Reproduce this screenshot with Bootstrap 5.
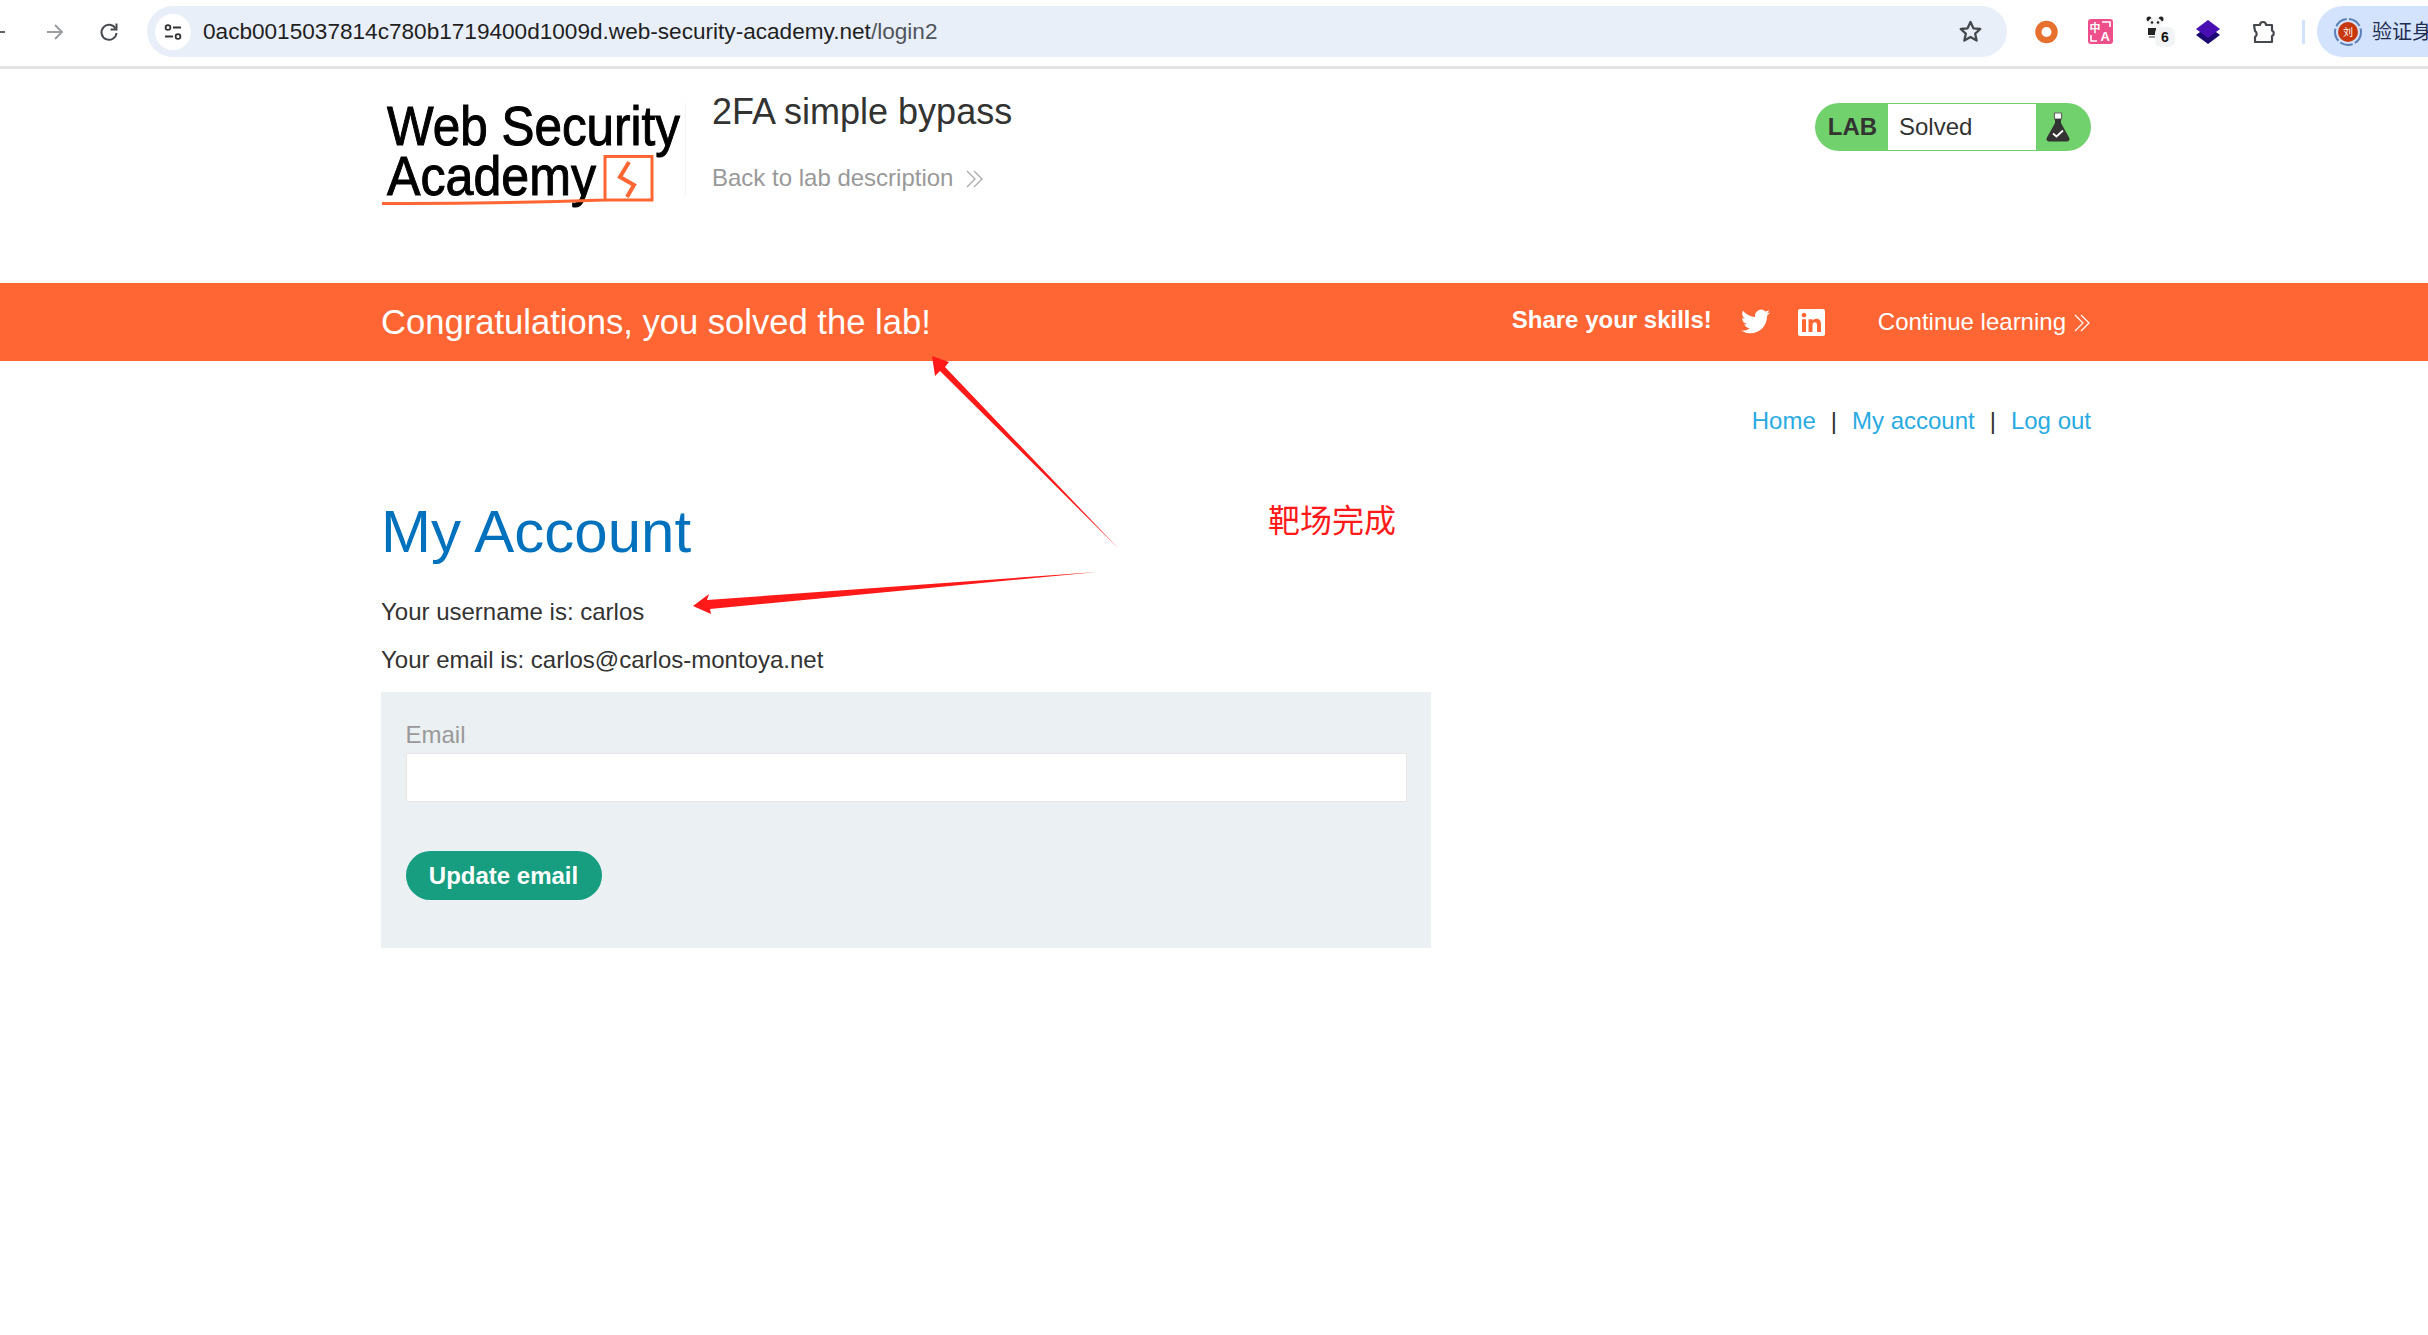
<!DOCTYPE html>
<html lang="en">
<head>
  <title>2FA simple bypass</title>
  <meta charset="UTF-8">
  <meta name="viewport" content="width=device-width, initial-scale=1.0">
  <link href="https://cdn.jsdelivr.net/npm/bootstrap@5.3.2/dist/css/bootstrap.min.css" rel="stylesheet">
  <style>
    body {
      font-family: "Liberation Sans", Arial, sans-serif;
      font-size: 24px;
      line-height: 30px;
      color: #333332;
      background-color: #fff;
      overflow: hidden;
    }
    /* browser toolbar */
    .tool-bar {
      height: 69px;
      padding-bottom: 3px;
      border-bottom: 3px solid #e3e3e3;
      overflow: hidden;
    }
    .tool-bar > * { flex-shrink: 0; }
    .tb-back { margin-left: -12px; width: 18px; }
    .tb-fwd { margin-left: 40px; width: 18px; }
    .tb-reload { margin-left: 35px; width: 20px; }
    .url-pill {
      margin-left: 28px;
      width: 1860px;
      height: 51px;
      padding: 0 24px 0 8px;
      background-color: #e9eff9;
      border-radius: 26px;
      font-size: 22.6px;
      color: #1f1f1f;
    }
    .url-path { color: #50555c; }
    .site-info {
      width: 36px;
      height: 36px;
      margin-right: 12px;
      background-color: #fff;
      border-radius: 50%;
    }
    .ext-ring { margin-left: 28px; width: 23px; }
    .ext-trans { margin-left: 30px; width: 25px; }
    .ext-panda { margin-left: 33px; width: 28px; height: 32px; }
    .ext-count {
      position: absolute;
      left: 9px;
      top: 11px;
      width: 20px;
      height: 20px;
      background-color: #f1f3f4;
      border-radius: 6px;
      font-size: 14px;
      font-weight: 700;
      line-height: 20px;
      text-align: center;
      color: #111;
    }
    .ext-layers { margin-left: 22px; width: 24px; }
    .ext-puzzle { margin-left: 32px; width: 24px; }
    .tb-sep { margin-left: 26px; width: 3px; height: 24px; background-color: #d3e3fd; }
    .profile-pill {
      margin-left: 12px;
      width: 140px;
      height: 51px;
      padding-left: 17px;
      background-color: #d3e3fd;
      border-radius: 26px 0 0 26px;
      font-family: "Liberation Sans", "Noto Sans CJK SC", sans-serif;
      font-size: 20px;
      color: #1f2d50;
      white-space: nowrap;
    }
    .profile-pill svg { margin-right: 10px; }

    /* lab page */
    .page-body { position: relative; height: 1266px; }
    .lab-wrap { margin-left: 381px; width: 1710px; }
    .lab-head { height: 214px; padding-top: 31px; }
    .lab-logo { width: 306px; height: 110px; margin-left: -1px; flex: none; }
    .lab-title-box { margin-left: 26px; }
    .lab-title { font-size: 36px; line-height: 37px; margin: -7px 0 33px; color: #333332; font-weight: 400; }
    .back-link { color: #999; text-decoration: none; }
    .back-link svg { margin-left: 13px; vertical-align: -2px; }
    .lab-status {
      width: 276px;
      height: 48px;
      margin-top: 3px;
      background-color: #70d16d;
      border-radius: 24px;
      overflow: hidden;
    }
    .lab-tag { width: 73px; text-align: center; font-weight: 700; padding-left: 2px; }
    .lab-state {
      width: 148px;
      height: 46px;
      padding-left: 11px;
      background-color: #fff;
      line-height: 46px;
    }
    .lab-flask { flex-grow: 1; padding-left: 10px; }
    .win-banner { height: 78px; background-color: #ff6633; color: #fff; }
    .win-text { font-size: 34.6px; }
    .share-text { font-weight: 700; margin-top: -5px; }
    .share-icon { margin-left: 28px; }
    .share-icon.tw { margin-left: 29px; margin-top: -1px; }
    .continue-link { margin-left: 53px; color: #fff; text-decoration: none; }
    .continue-link svg { margin-left: 8px; vertical-align: -2px; }
    .top-links { padding-top: 45px; }
    .top-links a { color: #29abe2; text-decoration: none; }
    .link-bar { margin: 0 15px; }
    .acct-title { font-size: 60px; line-height: 71px; margin: 60px 0 30px; color: #0071bc; font-weight: 400; }
    .acct-line { margin: 0 0 18px; }
    .mail-panel {
      width: 1050px;
      margin-top: -1px;
      padding: 28px 24.5px 48px;
      background-color: #ebf0f2;
    }
    .mail-label { display: block; margin-bottom: 3px; color: #999; }
    .mail-input.form-control {
      height: 49px;
      border: 1px solid #e6e6e6;
      border-radius: 0;
    }
    .mail-btn.btn {
      display: block;
      width: 196px;
      height: 49px;
      margin-top: 49px;
      padding: 0;
      background-color: #179e80;
      border: 0;
      border-radius: 25px;
      color: #fff;
      font-size: 24px;
      font-weight: 700;
      line-height: 47px;
    }
    /* annotations drawn on the screenshot */
    .note-layer { position: absolute; left: 0; top: -69px; width: 2428px; height: 1335px; pointer-events: none; }
    .note-text {
      position: absolute;
      left: 1268px;
      top: 429px;
      font-family: "Noto Sans CJK SC", sans-serif;
      font-size: 32px;
      line-height: 40px;
      color: #ff1a1a;
    }
  </style>
</head>
<body>
  <div class="tool-bar d-flex align-items-center">
    <svg class="tb-back" viewBox="0 0 18 18" height="18"><path d="M17 9H2M9 2 2 9l7 7" fill="none" stroke="#5f6368" stroke-width="2"/></svg>
    <svg class="tb-fwd" viewBox="0 0 18 18" height="18"><path d="M1 9h15M9 2l7 7-7 7" fill="none" stroke="#9a9da1" stroke-width="2"/></svg>
    <svg class="tb-reload" viewBox="0 0 20 20" height="20"><path d="M16.5 6.5A7.5 7.5 0 1 0 17.5 11" fill="none" stroke="#45494e" stroke-width="2"/><path d="M17.5 1.5v6h-6" fill="none" stroke="#45494e" stroke-width="2"/></svg>
    <div class="url-pill d-flex align-items-center">
      <span class="site-info d-flex align-items-center justify-content-center">
        <svg viewBox="0 0 20 20" width="20" height="20"><circle cx="5" cy="5.5" r="2.4" fill="none" stroke="#333" stroke-width="1.8"/><path d="M10 5.5h8M2 14.5h8" stroke="#333" stroke-width="1.8"/><circle cx="15" cy="14.5" r="2.4" fill="none" stroke="#333" stroke-width="1.8"/></svg>
      </span>
      <span>0acb0015037814c780b1719400d1009d.web-security-academy.net<span class="url-path">/login2</span></span>
      <svg class="ms-auto" viewBox="0 0 24 24" width="25" height="25"><path d="M12 2.8l2.8 6.1 6.6.7-4.9 4.5 1.4 6.6-5.9-3.4-5.9 3.4 1.4-6.6-4.9-4.5 6.6-.7z" fill="none" stroke="#45494e" stroke-width="2.2" stroke-linejoin="round"/></svg>
    </div>
    <svg class="ext-ring" viewBox="0 0 24 24" height="24"><circle cx="12" cy="12" r="8.5" fill="none" stroke="#e8702f" stroke-width="6.5"/></svg>
    <svg class="ext-trans" viewBox="0 0 25 25" height="25">
      <rect width="25" height="25" rx="3" fill="#ee4f8a"/>
      <text x="1.5" y="13" font-family="Noto Sans CJK SC, sans-serif" font-size="11" font-weight="700" fill="#fff">中</text>
      <text x="12.5" y="22" font-family="Liberation Sans, sans-serif" font-size="13" font-weight="700" fill="#fff">A</text>
      <path d="M14 3h8v5M3 16v6h6" fill="none" stroke="#fff" stroke-width="1.6"/>
    </svg>
    <div class="ext-panda position-relative">
      <svg viewBox="0 0 18 22" width="18" height="22" class="d-block">
        <circle cx="3" cy="3" r="2.5" fill="#222"/><circle cx="15" cy="3" r="2.5" fill="#222"/>
        <ellipse cx="9" cy="7" rx="7" ry="5.5" fill="#f4f4f4"/>
        <circle cx="6" cy="6.5" r="1.3" fill="#222"/><circle cx="12" cy="6.5" r="1.3" fill="#222"/>
        <path d="M2 12h8v7H2z" fill="#222"/><path d="M3 21h10" stroke="#777" stroke-width="1.5"/>
      </svg>
      <span class="ext-count">6</span>
    </div>
    <svg class="ext-layers" viewBox="0 0 24 24" height="24"><path d="M12 6 24 15l-12 9L0 15z" fill="#1c0a72"/><path d="M12 0 24 9l-12 9L0 9z" fill="#4a0fb3"/></svg>
    <svg class="ext-puzzle" viewBox="0 0 24 24" height="24"><path d="M2 5h6a3 3 0 0 1 6 0h6v5.500a3 3 0 0 1 0 5.500V22H3v-5a3.500 3.500 0 0 0 0-6z" fill="none" stroke="#45494e" stroke-width="2.200" stroke-linejoin="round"/></svg>
    <span class="tb-sep"></span>
    <div class="profile-pill d-flex align-items-center">
      <svg viewBox="0 0 28 28" width="28" height="28">
        <circle cx="14" cy="14" r="13" fill="none" stroke="#5b7fb5" stroke-width="2" stroke-dasharray="13 2.500"/>
        <circle cx="14" cy="14" r="10" fill="#c8380e"/>
        <text x="14" y="18" text-anchor="middle" font-family="Noto Sans CJK SC, sans-serif" font-size="10" fill="#fff">刘</text>
      </svg>
      <span>验证身</span>
    </div>
  </div>

  <div class="page-body">
    <div class="lab-wrap lab-head d-flex align-items-start">
      <svg class="lab-logo" viewBox="0 0 306 110">
        <text x="7" y="45" textLength="293" lengthAdjust="spacingAndGlyphs" font-family="Liberation Sans, sans-serif" font-size="55" fill="#000" stroke="#000" stroke-width="1">Web Security</text>
        <text x="7" y="95" textLength="209" lengthAdjust="spacingAndGlyphs" font-family="Liberation Sans, sans-serif" font-size="55" fill="#000" stroke="#000" stroke-width="1">Academy</text>
        <path d="M2 103.500Q110 104 225 100V56.500H272V100H225" fill="none" stroke="#ff6633" stroke-width="3"/>
        <path d="M249 62 240 77l14 8-7 12" fill="none" stroke="#ff6633" stroke-width="4"/>
        <path d="M306 3V96" stroke="#e6e6e6" stroke-width="1"/>
      </svg>
      <div class="lab-title-box">
        <h2 class="lab-title">2FA simple bypass</h2>
        <a class="back-link" href="#">Back to lab description<svg viewBox="0 0 18 18" width="18" height="18"><path d="M1 1l8 8-8 8M8 1l8 8-8 8" fill="none" stroke="#aaa" stroke-width="1.300"/></svg></a>
      </div>
      <div class="lab-status ms-auto d-flex align-items-center">
        <span class="lab-tag">LAB</span>
        <span class="lab-state">Solved</span>
        <span class="lab-flask d-flex">
          <svg viewBox="0 0 24 30" width="24" height="30">
            <path d="M8.500 1h7v6h-7z" fill="#fff" stroke="#666" stroke-width="1.200"/>
            <path d="M9 7h6v4l8.300 15q1 3-2 3.500H2.700q-3-.5-2-3.500L9 11z" fill="#333"/>
            <path d="M7 21.500l3.500 3 6.500-6" fill="none" stroke="#fff" stroke-width="1.800"/>
          </svg>
        </span>
      </div>
    </div>

    <div class="win-banner">
      <div class="lab-wrap h-100 d-flex align-items-center">
        <span class="win-text">Congratulations, you solved the lab!</span>
        <span class="share-text ms-auto">Share your skills!</span>
        <svg class="share-icon tw" viewBox="0 0 24 24" width="29" height="29"><path fill="#fff" d="M23.953 4.57a10 10 0 01-2.825.775 4.958 4.958 0 002.163-2.723c-.951.555-2.005.959-3.127 1.184a4.92 4.92 0 00-8.384 4.482C7.69 8.095 4.067 6.13 1.64 3.162a4.822 4.822 0 00-.666 2.475c0 1.71.87 3.213 2.188 4.096a4.904 4.904 0 01-2.228-.616v.06a4.923 4.923 0 003.946 4.827 4.996 4.996 0 01-2.212.085 4.936 4.936 0 004.604 3.417 9.867 9.867 0 01-6.102 2.105c-.39 0-.779-.023-1.17-.067a13.995 13.995 0 007.557 2.209c9.053 0 13.998-7.496 13.998-13.985 0-.21 0-.42-.015-.63A9.935 9.935 0 0024 4.59z"/></svg>
        <svg class="share-icon" viewBox="0 0 24 24" width="27" height="27"><path fill="#fff" d="M20.447 20.452h-3.554v-5.569c0-1.328-.027-3.037-1.852-3.037-1.853 0-2.136 1.445-2.136 2.939v5.667H9.351V9h3.414v1.561h.046c.477-.9 1.637-1.85 3.37-1.85 3.601 0 4.267 2.37 4.267 5.455v6.286zM5.337 7.433c-1.144 0-2.063-.926-2.063-2.065 0-1.138.92-2.063 2.063-2.063 1.14 0 2.064.925 2.064 2.063 0 1.139-.925 2.065-2.064 2.065zm1.782 13.019H3.555V9h3.564v11.452zM22.225 0H1.771C.792 0 0 .774 0 1.729v20.542C0 23.227.792 24 1.771 24h20.451C23.2 24 24 23.227 24 22.271V1.729C24 .774 23.2 0 22.222 0h.003z"/></svg>
        <a class="continue-link" href="#">Continue learning<svg viewBox="0 0 17 18" width="17" height="18"><path d="M1 1l8 8-8 8M7 1l8 8-8 8" fill="none" stroke="#fff" stroke-width="1.200"/></svg></a>
      </div>
    </div>

    <div class="lab-wrap">
      <div class="top-links d-flex justify-content-end">
        <a href="#">Home</a><span class="link-bar">|</span><a href="#">My account</a><span class="link-bar">|</span><a href="#">Log out</a>
      </div>
      <h1 class="acct-title">My Account</h1>
      <p class="acct-line">Your username is: carlos</p>
      <p class="acct-line">Your email is: carlos@carlos-montoya.net</p>
      <form class="mail-panel">
        <label class="mail-label" for="mail-box">Email</label>
        <input class="mail-input form-control" id="mail-box" type="email">
        <button class="mail-btn btn" type="button">Update email</button>
      </form>
    </div>

    <svg class="note-layer" viewBox="0 0 2428 1335">
      <path d="M932 356 949 362 945 367 1118 548 940 371 935 376z" fill="#ff1a1a"/>
      <path d="M693 606 709 594 707 600 1097 572 710 609 711 614z" fill="#ff1a1a"/>
    </svg>
    <div class="note-text">靶场完成</div>
  </div>
</body>
</html>
